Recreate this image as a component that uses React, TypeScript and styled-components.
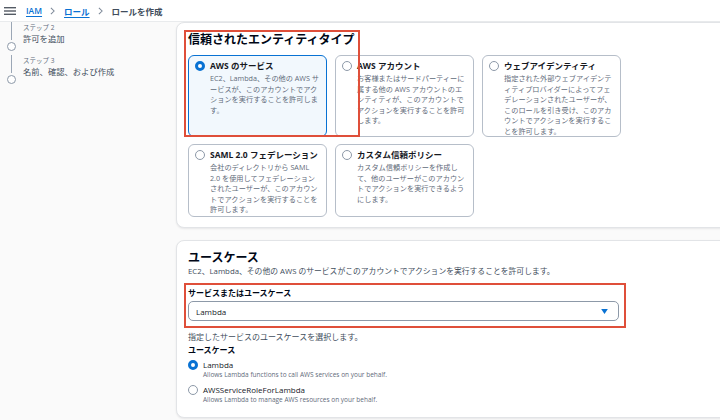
import styled, { createGlobalStyle } from 'styled-components';

const GlobalStyle = createGlobalStyle`
    html, body {
        margin: 0;
        padding: 0;
        width: 720px;
        height: 420px;
        overflow: hidden;
        background: #fafafa;
        font-family: 'Open Sans', 'Noto Sans CJK JP', sans-serif;
        color: #16191f;
    }
`;

interface CardData {
    title: string;
    lines: string[];
    selected?: boolean;
}

const entityCards: CardData[] = [
    {
        title: 'AWS のサービス',
        lines: ['EC2、Lambda、その他の AWS サ', 'ービスが、このアカウントでアク', 'ションを実行することを許可しま', 'す。'],
        selected: true,
    },
    {
        title: 'AWS アカウント',
        lines: ['お客様またはサードパーティーに', '属する他の AWS アカウントのエ', 'ンティティが、このアカウントで', 'アクションを実行することを許可', 'します。'],
    },
    {
        title: 'ウェブアイデンティティ',
        lines: ['指定された外部ウェブアイデンテ', 'ィティプロバイダーによってフェ', 'デレーションされたユーザーが、', 'このロールを引き受け、このアカ', 'ウントでアクションを実行するこ', 'とを許可します。'],
    },
    {
        title: 'SAML 2.0 フェデレーション',
        lines: ['会社のディレクトリから SAML', '2.0 を使用してフェデレーション', 'されたユーザーが、このアカウン', 'トでアクションを実行することを', '許可します。'],
    },
    {
        title: 'カスタム信頼ポリシー',
        lines: ['カスタム信頼ポリシーを作成し', 'て、他のユーザーがこのアカウン', 'トでアクションを実行できるよう', 'にします。'],
    },
];

const useCases = [
    { title: 'Lambda', desc: 'Allows Lambda functions to call AWS services on your behalf.', selected: true },
    { title: 'AWSServiceRoleForLambda', desc: 'Allows Lambda to manage AWS resources on your behalf.', selected: false },
];

const Chevron = () => (
    <Sep viewBox="0 0 6 10">
        <path d="M1 1 L5 5 L1 9" />
    </Sep>
);

const App = () => {
    return (
        <>
            <GlobalStyle />
            <TopBar>
                <Hamburger viewBox="0 0 12 8">
                    <rect x="0" y="0" width="12" height="1.4" />
                    <rect x="0" y="3.3" width="12" height="1.4" />
                    <rect x="0" y="6.6" width="12" height="1.4" />
                </Hamburger>
                <Crumb>IAM</Crumb>
                <Chevron />
                <Crumb>ロール</Crumb>
                <Chevron />
                <Current>ロールを作成</Current>
            </TopBar>
            <Body>
                <Sidebar>
                    <Step>
                        <Marker>
                            <Line />
                            <Circle />
                        </Marker>
                        <StepText>
                            <StepNo>ステップ 2</StepNo>
                            <StepName>許可を追加</StepName>
                        </StepText>
                    </Step>
                    <Step $later>
                        <Marker>
                            <Line />
                            <Circle />
                        </Marker>
                        <StepText>
                            <StepNo>ステップ 3</StepNo>
                            <StepName>名前、確認、および作成</StepName>
                        </StepText>
                    </Step>
                </Sidebar>
                <Main>
                    <Panel>
                        <Annotation />
                        <PanelTitle>信頼されたエンティティタイプ</PanelTitle>
                        <CardGrid>
                            {entityCards.map((c) => (
                                <Card key={c.title} $selected={c.selected}>
                                    <Radio $checked={c.selected} />
                                    <CardTitle>{c.title}</CardTitle>
                                    <span />
                                    <CardDesc>
                                        {c.lines.map((l) => (
                                            <DescLine key={l}>{l}</DescLine>
                                        ))}
                                    </CardDesc>
                                </Card>
                            ))}
                        </CardGrid>
                    </Panel>
                    <Panel $second>
                        <PanelTitle>ユースケース</PanelTitle>
                        <PanelDesc>EC2、Lambda、その他の AWS のサービスがこのアカウントでアクションを実行することを許可します。</PanelDesc>
                        <Highlight>
                            <FieldLabel>サービスまたはユースケース</FieldLabel>
                            <Select>
                                <span>Lambda</span>
                                <Caret viewBox="0 0 8 6">
                                    <path d="M0 0 H8 L4 6 Z" />
                                </Caret>
                            </Select>
                        </Highlight>
                        <Hint>指定したサービスのユースケースを選択します。</Hint>
                        <FieldLabel>ユースケース</FieldLabel>
                        <RadioList>
                            {useCases.map((u) => (
                                <RadioItem key={u.title}>
                                    <Radio $checked={u.selected} />
                                    <RadioTitle>{u.title}</RadioTitle>
                                    <span />
                                    <RadioDesc>{u.desc}</RadioDesc>
                                </RadioItem>
                            ))}
                        </RadioList>
                    </Panel>
                </Main>
            </Body>
        </>
    );
};

const TopBar = styled.div`
    height: 22px;
    display: flex;
    align-items: center;
    padding-left: 4px;
    background: #fff;
    border-bottom: 1px solid #e9ebed;
    box-sizing: border-box;
    font-size: 8.5px;
`;
const Hamburger = styled.svg`
    width: 12px;
    height: 8px;
    fill: #545b64;
    margin-right: 10px;
`;
const Crumb = styled.span`
    color: #0972d3;
    font-weight: 600;
    text-decoration: underline;
    text-decoration-color: #0972d3;
    text-underline-offset: 2px;
`;
const Sep = styled.svg`
    width: 5px;
    height: 8px;
    margin: 0 9px 0 8px;
    fill: none;
    stroke: #7d8998;
    stroke-width: 1.3;
`;
const Current = styled.span`
    color: #414d5c;
    font-weight: 700;
`;
const Body = styled.div`
    display: flex;
    align-items: flex-start;
`;
const Sidebar = styled.div`
    width: 176px;
    flex-shrink: 0;
`;
const Step = styled.div<{ $later?: boolean }>`
    display: flex;
    margin-top: ${(p) => (p.$later ? '1px' : '0')};
`;
const Marker = styled.div`
    width: 22px;
    display: flex;
    flex-direction: column;
    align-items: center;
    padding-bottom: 2px;
`;
const Line = styled.div`
    width: 1px;
    flex: 1;
    background: #9ba7b6;
    margin-bottom: 2px;
`;
const Circle = styled.div`
    width: 7px;
    height: 7px;
    border: 1px solid #8d99a8;
    border-radius: 50%;
    background: #fff;
    margin-bottom: 1px;
`;
const StepText = styled.div`
    padding-left: 1px;
`;
const StepNo = styled.div`
    font-size: 6.5px;
    line-height: 10px;
    color: #5f6b7a;
    padding-top: 1px;
`;
const StepName = styled.div`
    font-size: 8.3px;
    line-height: 12px;
    color: #414d5c;
    margin-bottom: 9px;
`;
const Main = styled.div`
    display: flex;
    flex-direction: column;
    gap: 12px;
`;
const Panel = styled.div<{ $second?: boolean }>`
    position: relative;
    width: 570px;
    background: #fff;
    border: 1px solid #e2e4e7;
    border-radius: 8px;
    box-shadow: 0 1px 2px rgba(0, 7, 22, 0.08);
    padding: 9px 11px ${(p) => (p.$second ? '12px' : '10px')};
    box-sizing: border-box;
`;
const Annotation = styled.div`
    position: absolute;
    left: 7px;
    top: 7px;
    width: 176px;
    height: 107px;
    border: 2px solid #df4f3a;
    box-sizing: border-box;
    pointer-events: none;
`;
const PanelTitle = styled.div`
    font-size: 12px;
    line-height: 16px;
    font-weight: 700;
    color: #000716;
`;
const CardGrid = styled.div`
    margin-top: 7px;
    display: grid;
    grid-template-columns: repeat(3, 139px);
    grid-template-rows: 82px 73px;
    gap: 7px 8px;
`;
const Card = styled.div<{ $selected?: boolean }>`
    box-sizing: border-box;
    border: 1px solid ${(p) => (p.$selected ? '#0972d3' : '#b6bec9')};
    background: ${(p) => (p.$selected ? '#f2f8fd' : '#fff')};
    border-radius: 6px;
    padding: 4px 6px 4px 6px;
    display: grid;
    grid-template-columns: 10px 1fr;
    column-gap: 5px;
    align-content: start;
    align-items: center;
`;
const Radio = styled.div<{ $checked?: boolean }>`
    width: 10px;
    height: 10px;
    box-sizing: border-box;
    border-radius: 50%;
    border: ${(p) => (p.$checked ? '3px solid #0972d3' : '1px solid #8d99a8')};
    background: #fff;
`;
const CardTitle = styled.div`
    font-size: 8.5px;
    line-height: 12px;
    font-weight: 700;
    color: #16191f;
    white-space: nowrap;
`;
const CardDesc = styled.div`
    font-size: 7.2px;
    line-height: 10.6px;
    color: #5f6b7a;
    margin-top: 1px;
`;
const DescLine = styled.div`
    white-space: nowrap;
`;
const PanelDesc = styled.div`
    font-size: 7.8px;
    line-height: 10px;
    color: #414d5c;
`;
const Highlight = styled.div`
    width: 442px;
    box-sizing: border-box;
    margin: 7px 0 0 -4px;
    border: 2px solid #df4f3a;
    padding: 2px 5px 5px 2px;
`;
const FieldLabel = styled.div`
    font-size: 8px;
    line-height: 11px;
    font-weight: 700;
    color: #000716;
`;
const Select = styled.div`
    margin-top: 3px;
    height: 20px;
    box-sizing: border-box;
    border: 1px solid #8d99a8;
    border-radius: 5px;
    display: flex;
    align-items: center;
    justify-content: space-between;
    padding: 0 10px 0 7px;
    font-size: 8px;
    color: #16191f;
`;
const Caret = styled.svg`
    width: 7px;
    height: 5px;
    fill: #0972d3;
`;
const Hint = styled.div`
    margin-top: 3px;
    font-size: 8px;
    line-height: 11px;
    color: #414d5c;
    margin-bottom: 2px;
`;
const RadioList = styled.div`
    display: flex;
    flex-direction: column;
    gap: 4px;
    margin-top: 4px;
`;
const RadioItem = styled.div`
    display: grid;
    grid-template-columns: 10px 1fr;
    column-gap: 5px;
    align-items: center;
`;
const RadioTitle = styled.div`
    font-size: 8px;
    line-height: 11px;
    color: #16191f;
`;
const RadioDesc = styled.div`
    font-size: 6.5px;
    line-height: 10px;
    color: #5f6b7a;
`;

export default App;
